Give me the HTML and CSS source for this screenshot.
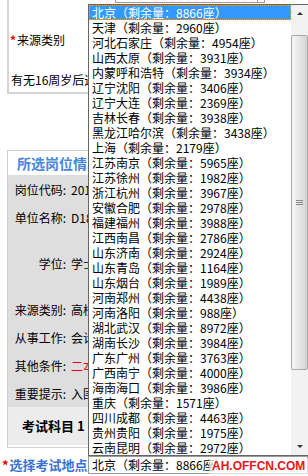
FILE: index.html
```html
<!DOCTYPE html>
<html lang="zh-CN">
<head>
    <meta charset="UTF-8">
    <meta name="viewport" content="width=device-width, initial-scale=1.0">
    <title>选择考试地点</title>
    <link rel="stylesheet" href="styles.css">
</head>
<body>
    <!-- previous form block -->
    <div class="src-box">
        <div class="prev-select"><span class="prev-btn"></span></div>
        <div class="src-row src-type"><span class="req">*</span>来源类别</div>
        <div class="src-row src-age">有无16周岁后近三年基层工作经历</div>
    </div>

    <!-- selected job summary -->
    <div class="job-box">
        <div class="job-tab">所选岗位情况</div>
        <div class="job-body">
            <div class="job-row"><span class="job-label">岗位代码:</span><span class="job-value">201310001001</span></div>
            <div class="job-row"><span class="job-label">单位名称:</span><span class="job-value">D18国家统计局</span></div>
            <div class="job-row tall"><span class="job-label">学位:</span><span class="job-value">学士</span></div>
            <div class="job-row"><span class="job-label">来源类别:</span><span class="job-value">高校应届毕业生</span></div>
            <div class="job-row"><span class="job-label">从事工作:</span><span class="job-value">会计核算</span></div>
            <div class="job-row"><span class="job-label">其他条件:</span><span class="job-value warn">二本及以上</span></div>
            <div class="job-row"><span class="job-label">重要提示:</span><span class="job-value">入围面试人员</span></div>
        </div>
        <div class="job-exam">考试科目 1</div>
    </div>

    <div class="pick-row">
        <span class="pick-label"><span class="req">*</span>选择考试地点</span>
        <div class="pick-select">北京（剩余量：8866座）</div>
    </div>

    <!-- open dropdown of the exam city select -->
    <div class="city-list">
        <ul class="city-options">
            <li class="selected">北京（剩余量：8866座）</li>
            <li>天津（剩余量：2960座）</li>
            <li>河北石家庄（剩余量：4954座）</li>
            <li>山西太原（剩余量：3931座）</li>
            <li>内蒙呼和浩特（剩余量：3934座）</li>
            <li>辽宁沈阳（剩余量：3406座）</li>
            <li>辽宁大连（剩余量：2369座）</li>
            <li>吉林长春（剩余量：3938座）</li>
            <li>黑龙江哈尔滨（剩余量：3438座）</li>
            <li>上海（剩余量：2179座）</li>
            <li>江苏南京（剩余量：5965座）</li>
            <li>江苏徐州（剩余量：1982座）</li>
            <li>浙江杭州（剩余量：3967座）</li>
            <li>安徽合肥（剩余量：2978座）</li>
            <li>福建福州（剩余量：3988座）</li>
            <li>江西南昌（剩余量：2786座）</li>
            <li>山东济南（剩余量：2924座）</li>
            <li>山东青岛（剩余量：1164座）</li>
            <li>山东烟台（剩余量：1989座）</li>
            <li>河南郑州（剩余量：4438座）</li>
            <li>河南洛阳（剩余量：988座）</li>
            <li>湖北武汉（剩余量：8972座）</li>
            <li>湖南长沙（剩余量：3984座）</li>
            <li>广东广州（剩余量：3763座）</li>
            <li>广西南宁（剩余量：4000座）</li>
            <li>海南海口（剩余量：3986座）</li>
            <li>重庆（剩余量：1571座）</li>
            <li>四川成都（剩余量：4463座）</li>
            <li>贵州贵阳（剩余量：1975座）</li>
            <li>云南昆明（剩余量：2972座）</li>
        </ul>
        <div class="scrollbar">
            <div class="sb-btn up"></div>
            <div class="sb-track">
                <div class="sb-thumb"><span class="sb-grip"></span></div>
            </div>
            <div class="sb-btn down"></div>
        </div>
    </div>

    <div class="watermark">AH.OFFCN.COM</div>
</body>
</html>
```

FILE: styles.css
```css
/* Page reset */
html, body {
    margin: 0;
    padding: 0;
    overflow: hidden;
}

body {
    position: relative;
    width: 308px;
    height: 476px;
    background: #fff;
    color: #000;
    font-family: "Noto Sans CJK SC", sans-serif;
    font-size: 12px;
}

.req {
    color: #e60000;
    font-weight: bold;
    margin-right: 1px;
}

/* Previous form block */
.src-box {
    margin-left: 7px;
    height: 94px;
    box-sizing: border-box;
    border-left: 2px solid #d4d4d4;
    border-bottom: 2px solid #d4d4d4;
}

.prev-select {
    margin-left: 106px;
    width: 148px;
    height: 2px;
    border: 1px solid #9c9c9c;
    border-top: 0;
    display: flex;
    justify-content: flex-end;
}

.prev-btn {
    width: 6px;
    border-left: 1px solid #9c9c9c;
}

/* text runs under the open list, so cut it at the list edge */
.src-row {
    width: 79px;
    height: 20px;
    line-height: 20px;
    white-space: nowrap;
    overflow: hidden;
}

.src-type {
    margin-top: 27px;
    padding-left: 1px;
}

.src-age {
    margin-top: 20px;
    padding-left: 2px;
}

/* Job summary */
.job-box {
    margin: 56px 0 0 7px;
    border-left: 1px solid #d0d0d0;
    border-top: 1px solid #d0d0d0;
    border-bottom: 1px solid #d0d0d0;
    padding-bottom: 2px;
}

.job-tab {
    width: 71px;
    height: 24px;
    line-height: 24px;
    padding-left: 9px;
    font-size: 14px;
    font-weight: bold;
    color: #4a86de;
    white-space: nowrap;
    overflow: hidden;
}

.job-body {
    background: #dedede;
}

.job-row {
    display: flex;
    align-items: center;
    height: 28px;
    white-space: nowrap;
}

.job-row.tall {
    height: 64px;
}

.job-label {
    flex: none;
    width: 58px;
    text-align: right;
}

.job-value {
    margin-left: 5px;
    width: 17px;
    overflow: hidden;
}

.job-value.warn {
    color: #e60000;
}

.job-exam {
    height: 38px;
    line-height: 38px;
    padding-left: 14px;
    background: #ececec;
    font-size: 13px;
    font-weight: bold;
}

/* Exam city row */
.pick-row {
    margin-top: 8px;
    display: flex;
    height: 18px;
}

.pick-label {
    flex: none;
    width: 86px;
    padding-left: 2px;
    line-height: 18px;
    font-size: 13px;
    font-weight: bold;
    color: #3b73d1;
    white-space: nowrap;
}

.pick-select {
    flex: 1;
    border: 1px solid #9a9a9a;
    line-height: 16px;
    padding-left: 3px;
    white-space: nowrap;
}

/* Open dropdown */
.city-list {
    position: absolute;
    left: 88px;
    top: 4px;
    width: 221px;
    height: 452px;
    box-sizing: border-box;
    border: 1px solid #666;
    background: #fff;
    display: flex;
}

.city-options {
    list-style: none;
    margin: 0;
    padding: 0;
    width: 202px;
    flex: none;
}

.city-options li {
    height: 15px;
    line-height: 15px;
    padding-left: 3px;
    white-space: nowrap;
}

.city-options li.selected {
    background: #3399ff;
    color: #fff;
    outline: 1px dotted #e8a040;
    outline-offset: -1px;
}

.scrollbar {
    width: 17px;
    flex: none;
    display: flex;
    flex-direction: column;
    background: #f2f2f2;
}

.sb-btn {
    height: 17px;
    display: flex;
    align-items: center;
    justify-content: center;
}

.sb-btn::before {
    content: '';
    border-left: 3px solid transparent;
    border-right: 3px solid transparent;
    border-bottom: 3px solid #333;
}

.sb-btn.down::before {
    border-bottom: 0;
    border-top: 3px solid #333;
}

.sb-track {
    flex: 1;
    padding-top: 13px;
}

.sb-thumb {
    height: 335px;
    box-sizing: border-box;
    border: 1px solid #a8a8a8;
    border-radius: 2px;
    background: linear-gradient(to right, #f7f7f7, #d4d4d4);
    display: flex;
    align-items: center;
    justify-content: center;
}

.sb-grip {
    width: 7px;
    height: 1px;
    background: #888;
    box-shadow: 0 2px #888, 0 -2px #888;
}

/* Site watermark */
.watermark {
    position: absolute;
    left: 209px;
    top: 458px;
    width: 96px;
    height: 16px;
    padding-left: 3px;
    background: rgba(255, 255, 255, 0.65);
    font-family: "Liberation Sans", sans-serif;
    font-size: 12px;
    font-weight: bold;
    line-height: 16px;
    color: #e8151b;
    text-shadow: 1px 1px 0 #fff, -1px -1px 0 #fff;
    white-space: nowrap;
}
```
